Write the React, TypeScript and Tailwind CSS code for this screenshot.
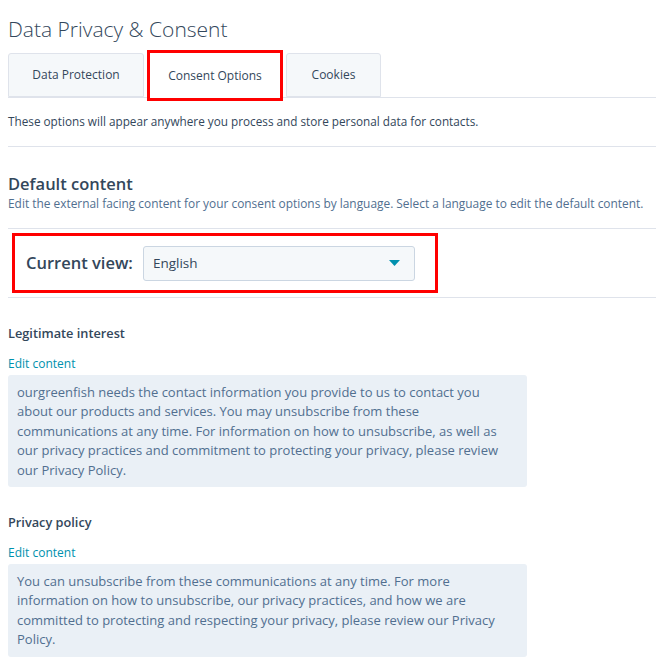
const font = { fontFamily: '"Open Sans", "Noto Sans", sans-serif' };

function Tab({ label, active }: { label: string; active?: boolean }) {
  if (active) {
    return (
      <div className="h-[51px] -mb-[4px] border-[3px] border-[#ff0000] bg-white flex items-center justify-center w-[136px] ml-[3px] -mt-[2px] z-10">
        <span className="text-[12px] text-[#33475b]">{label}</span>
      </div>
    );
  }
  return (
    <div className="h-[44px] border border-[#dfe3eb] bg-[#f5f8fa] flex items-center justify-center rounded-t-[3px]">
      <span className="text-[12px] text-[#33475b]">{label}</span>
    </div>
  );
}

function Section({ title, body }: { title: string; body: string }) {
  return (
    <div>
      <div className="text-[12.75px] font-semibold text-[#33475b] leading-[18px]">{title}</div>
      <div className="mt-[14px] text-[12px] text-[#0091ae] leading-[16px]">Edit content</div>
      <div className="mt-[3px] w-[519px] bg-[#eaf0f6] rounded-[3px] pl-[9px] pr-[14px] pt-[7.5px] pb-[7px] text-[13px] leading-[19.5px] text-[#516f90]">
        {body}
      </div>
    </div>
  );
}

export default function App() {
  return (
    <div className="min-h-screen bg-white pl-[8px]" style={font}>
      <h1 className="pt-[15px] text-[21px] font-light leading-[28px] text-[#33475b]">Data Privacy &amp; Consent</h1>

      <div className="mt-[11px] flex items-end border-b border-[#dfe3eb] h-[44px]">
        <div className="w-[136px]"><Tab label="Data Protection" /></div>
        <Tab label="Consent Options" active />
        <div className="w-[95px] ml-[3px]"><Tab label="Cookies" /></div>
      </div>

      <p className="mt-[15px] text-[11.75px] leading-[16px] text-[#33475b]">
        These options will appear anywhere you process and store personal data for contacts.
      </p>

      <div className="mt-[17px] border-t border-[#dfe3eb]" />

      <h2 className="mt-[26px] text-[16.5px] font-semibold leading-[22px] text-[#33475b]">Default content</h2>
      <p className="mt-[0px] text-[11.9px] leading-[16px] text-[#516f90]">
        Edit the external facing content for your consent options by language. Select a language to edit the default content.
      </p>

      <div className="mt-[17px] border-y border-[#dfe3eb] h-[70px] flex items-center">
        <div className="ml-[4px] w-[426px] h-[60px] border-[3px] border-[#ff0000] flex items-center pl-[11px]">
          <span className="text-[16.5px] font-semibold text-[#33475b]">Current view:</span>
          <div className="ml-[10px] w-[272px] h-[35px] bg-[#f5f8fa] border border-[#cbd6e2] rounded-[3px] flex items-center justify-between pl-[9px] pr-[14px]">
            <span className="text-[13.5px] text-[#33475b]">English</span>
            <svg width="11" height="6" viewBox="0 0 11 6"><path d="M0 0h11L5.5 6z" fill="#0091ae" /></svg>
          </div>
        </div>
      </div>

      <div className="mt-[26px]">
        <Section
          title="Legitimate interest"
          body="ourgreenfish needs the contact information you provide to us to contact you about our products and services. You may unsubscribe from these communications at any time. For information on how to unsubscribe, as well as our privacy practices and commitment to protecting your privacy, please review our Privacy Policy."
        />
      </div>
      <div className="mt-[26px]">
        <Section
          title="Privacy policy"
          body="You can unsubscribe from these communications at any time. For more information on how to unsubscribe, our privacy practices, and how we are committed to protecting and respecting your privacy, please review our Privacy Policy."
        />
      </div>
    </div>
  );
}
